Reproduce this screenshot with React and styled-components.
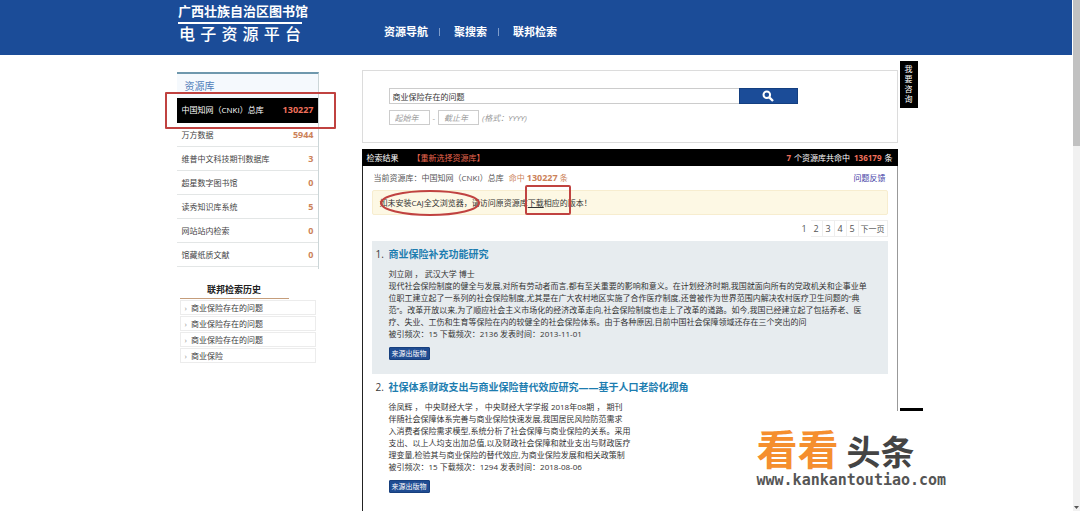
import React from "react";
import styled, { createGlobalStyle } from "styled-components";

const GlobalStyle = createGlobalStyle`
  * { box-sizing: border-box; }
  body {
    margin: 0;
    background: #fff;
    color: #3c3c3c;
    font: 8px/12px "Open Sans", "Noto Sans CJK SC", sans-serif;
  }
  ul, ol, h1, h2, h3, p { margin: 0; padding: 0; list-style: none; font-size: inherit; }
  a { color: inherit; text-decoration: none; }
  input, button { font: inherit; margin: 0; }
`;

const Page = styled.div`
  display: flex;
  height: 100vh;
  overflow: hidden;
`;
const Content = styled.div`
  flex: 1;
  min-width: 0;
`;
const Wrap = styled.div`
  width: 100%;
  max-width: 720px;
  margin: 0 auto;
  display: grid;
  grid-template-columns: 142px minmax(0, 1fr);
  column-gap: 43px;
`;
const Header = styled.header`
  height: 55px;
  margin-right: 1px;
  background: #1b4c98;
  color: #fff;
`;
const Logo = styled.h1`
  padding: 2px 0 0 2px;
  font-weight: 700;
  white-space: nowrap;
`;
const LogoTop = styled.span`
  display: block;
  font-size: 13px;
  line-height: 18px;
`;
const LogoBottom = styled.span`
  display: block;
  width: 124px;
  margin-top: 2px;
  border-top: 2px solid #fff;
  padding: 0 1px;
  font-size: 16px;
  line-height: 21px;
  font-weight: 500;
  text-align-last: justify;
`;
const Nav = styled.nav`
  padding: 23px 0 0 23px;
  font-size: 11px;
  line-height: 18px;
  font-weight: 700;
`;
const NavList = styled.ul`
  display: flex;
  align-items: center;
`;
const NavItem = styled.li`
  display: flex;
  align-items: center;
  & + &::before {
    content: "";
    height: 8px;
    margin: 0 14px 0 11px;
    border-left: 1px solid #7f9dcb;
  }
`;

const Body = styled(Wrap)`
  padding-left: 1px;
  max-width: 722px;
`;
const Sidebar = styled.aside`
  padding-top: 17px;
`;
const Databases = styled.section`
  border-top: 2px solid #6f98ad;
  border-right: 1px solid #ccd6d8;
  padding-bottom: 2px;
`;
const DbTitle = styled.h2`
  padding: 1px 8px 0;
  height: 24px;
  font-size: 10px;
  line-height: 23px;
  font-weight: 400;
  color: #4e7db9;
  background: #f5f9fd;
`;
const DbRow = styled.li`
  position: relative;
  height: ${(p) => (p.$active ? "25px" : "24px")};
  border-bottom: 1px solid ${(p) => (p.$active ? "#000" : "#e3e6e6")};
  background: ${(p) => (p.$active ? "#000" : "#fff")};
  color: ${(p) => (p.$active ? "#fff" : "#444")};
`;
const DbLink = styled.a`
  display: flex;
  justify-content: space-between;
  padding: 0 4px 0 5px;
  line-height: 24px;
`;
const Count = styled.b`
  font-size: 9px;
  color: ${(p) => (p.$hot ? "#f0705c" : "#cc8259")};
`;
const RowMark = styled.span`
  position: absolute;
  inset: -6px -18px -7px -12px;
  border: 2px solid #c04240;
  border-radius: 1px;
  pointer-events: none;
  z-index: 1;
`;
const History = styled.section`
  margin: 14px 3px 0;
`;
const HistoryTitle = styled.h2`
  width: 109px;
  height: 16px;
  border-bottom: 1px solid #c59d7b;
  font-size: 9px;
  line-height: 14px;
  text-align: center;
  color: #222;
`;
const HistoryRow = styled.li`
  height: 15px;
  margin: 1px 0;
  border: 1px solid #ececec;
  line-height: 13px;
  & a { display: flex; gap: 4px; padding-left: 4px; }
  & a::before { content: "›"; color: #999; }
`;

const Main = styled.main`
  position: relative;
  padding-top: 15px;
`;
const SearchPanel = styled.form`
  height: 73px;
  padding: 17px 26px 0;
  border: 1px solid #dcdcdc;
`;
const SearchLine = styled.div`
  display: flex;
  width: 409px;
`;
const Keyword = styled.input`
  flex: 1;
  min-width: 0;
  height: 16px;
  padding: 0 3px;
  border: 1px solid #ccc;
  border-right: 0;
  color: #333;
`;
const SearchButton = styled.button`
  display: flex;
  align-items: center;
  justify-content: center;
  width: 59px;
  height: 16px;
  padding: 0;
  border: 1px solid #143f80;
  background: #1b4c98;
`;
const YearLine = styled.div`
  display: flex;
  align-items: center;
  gap: 3px;
  margin-top: 6px;
  color: #999;
`;
const YearInput = styled.input`
  width: 41px;
  height: 15px;
  padding: 0 5px;
  border: 1px solid #ccc;
  font-style: italic;
  &::placeholder { color: #999; opacity: 1; }
`;
const Results = styled.section`
  position: relative;
  margin-top: 6px;
  min-height: 420px;
  border-left: 1px solid #222;
  border-right: 1px solid #999;
`;
const ResultsBar = styled.div`
  display: flex;
  justify-content: space-between;
  height: 17px;
  margin: 0 -1px;
  padding: 0 5px;
  background: #000;
  color: #fff;
  line-height: 17px;
  & b { font-size: 8px; color: #f0705c; margin: 0 3px 0 2px; }
`;
const Reselect = styled.a`
  margin-left: 14px;
  color: #e8664f;
`;
const Inner = styled.div`
  padding: 0 9px;
`;
const Current = styled.div`
  display: flex;
  justify-content: space-between;
  height: 24px;
  padding: 0 2px;
  line-height: 24px;
  color: #555;
`;
const Hits = styled.span`
  margin-left: 5px;
  color: #cc8259;
`;
const Feedback = styled.a`
  color: #3e3ba5;
`;
const Notice = styled.p`
  position: relative;
  height: 25px;
  padding: 0 7px;
  border: 1px solid #f7edcf;
  border-radius: 2px;
  background: #fdf8e4;
  line-height: 23px;
  color: #333;
  & a { text-decoration: underline; }
`;
const NoticeMarks = styled.svg`
  position: absolute;
  left: 0;
  top: -7px;
  width: 210px;
  height: 34px;
  fill: none;
  stroke: #c04240;
  stroke-width: 2;
`;
const Pager = styled.nav`
  display: flex;
  justify-content: flex-end;
  margin-top: 5px;
  padding-bottom: 4px;
`;
const PageLink = styled.a`
  min-width: 12px;
  height: 17px;
  padding: 0 2px;
  border: 1px solid ${(p) => (p.$current ? "transparent" : "#eee")};
  border-left: 0;
  font-size: ${(p) => (p.$wide ? "8px" : "9px")};
  line-height: 15px;
  text-align: center;
  color: #555;
`;
const Result = styled.li`
  display: grid;
  grid-template-columns: 13px minmax(0, 1fr);
  padding: 6px 4px 14px;
  background: ${(p) => (p.$shaded ? "#e7ecef" : "transparent")};
`;
const Num = styled.span`
  font-size: 10px;
  line-height: 14px;
`;
const ResultTitle = styled.h3`
  margin-bottom: 7px;
  font-size: 10px;
  line-height: 14px;
  color: #1d7db0;
  white-space: nowrap;
`;
const Line = styled.p`
  white-space: pre;
  color: #333;
`;
const SourceButton = styled.button`
  display: block;
  height: 13px;
  margin-top: 7px;
  padding: 0 2px;
  border: 1px solid #173f7d;
  border-radius: 1px;
  background: #1f4c92;
  color: #fff;
  font-size: 7px;
  line-height: 11px;
`;
const Consult = styled.a`
  position: absolute;
  top: 6px;
  right: -20px;
  width: 18px;
  padding: 3px 5px 4px;
  background: #000;
  color: #fff;
  line-height: 10px;
  word-break: break-all;
`;
const Watermark = styled.div`
  position: absolute;
  left: 271px;
  top: 262px;
  width: 439px;
  height: 180px;
  padding: 18px 0 0 123px;
  background: #fff;
`;
const ConsultEdge = styled.span`
  position: absolute;
  left: 266px;
  top: -3px;
  width: 23px;
  height: 3px;
  background: #000;
`;
const Brand = styled.div`
  display: flex;
  align-items: baseline;
  gap: 8px;
  font-size: 34px;
  line-height: 40px;
  font-weight: 700;
  color: #444;
`;
const BrandHot = styled.span`
  font-size: 41px;
  color: #f58f2e;
`;
const BrandUrl = styled.div`
  font: 700 15px/16px "DejaVu Sans Mono", monospace;
  color: #555;
`;
const Scrollbar = styled.div`
  display: flex;
  flex-direction: column;
  justify-content: space-between;
  align-items: center;
  width: 7px;
  background: #f1f1f1;
`;
const Thumb = styled.div`
  width: 7px;
  height: 146px;
  background: #c1c1c1;
`;

const databases = [
  ["中国知网（CNKI）总库", "130227"],
  ["万方数据", "5944"],
  ["维普中文科技期刊数据库", "3"],
  ["超星数字图书馆", "0"],
  ["读秀知识库系统", "5"],
  ["网站站内检索", "0"],
  ["馆藏纸质文献", "0"],
];
const history = ["商业保险存在的问题", "商业保险存在的问题", "商业保险存在的问题", "商业保险"];
const results = [
  {
    title: "商业保险补充功能研究",
    lines: [
      "刘立刚 ， 武汉大学 博士",
      "现代社会保险制度的健全与发展,对所有劳动者而言,都有至关重要的影响和意义。在计划经济时期,我国就面向所有的党政机关和企事业单",
      "位职工建立起了一系列的社会保险制度,尤其是在广大农村地区实施了合作医疗制度,还曾被作为世界范围内解决农村医疗卫生问题的“典",
      "范”。改革开放以来,为了顺应社会主义市场化的经济改革走向,社会保险制度也走上了改革的道路。如今,我国已经建立起了包括养老、医",
      "疗、失业、工伤和生育等保险在内的较健全的社会保险体系。由于各种原因,目前中国社会保障领域还存在三个突出的问",
      "被引频次：15 下载频次：2136 发表时间：2013-11-01",
    ],
  },
  {
    title: "社保体系财政支出与商业保险替代效应研究——基于人口老龄化视角",
    lines: [
      "徐凤辉 ， 中央财经大学 ， 中央财经大学学报 2018年08期 ， 期刊",
      "伴随社会保障体系完善与商业保险快速发展,我国居民风险防范需求",
      "入消费者保险需求模型,系统分析了社会保障与商业保险的关系。采用",
      "支出、以上人均支出加总值,以及财政社会保障和就业支出与财政医疗",
      "理变量,检验其与商业保险的替代效应,为商业保险发展和相关政策制",
      "被引频次：15 下载频次：1294 发表时间：2018-08-06",
    ],
  },
];

export default function App() {
  return (
    <Page>
      <GlobalStyle />
      <Content>
        <Header>
          <Wrap>
            <Logo>
              <LogoTop>广西壮族自治区图书馆</LogoTop>
              <LogoBottom>电子资源平台</LogoBottom>
            </Logo>
            <Nav>
              <NavList>
                {["资源导航", "聚搜索", "联邦检索"].map((t) => (
                  <NavItem key={t}><a href="#">{t}</a></NavItem>
                ))}
              </NavList>
            </Nav>
          </Wrap>
        </Header>
        <Body>
          <Sidebar>
            <Databases>
              <DbTitle>资源库</DbTitle>
              <ul>
                {databases.map(([name, n], i) => (
                  <DbRow key={name} $active={i === 0}>
                    <DbLink href="#">{name}<Count $hot={i === 0}>{n}</Count></DbLink>
                    {i === 0 && <RowMark />}
                  </DbRow>
                ))}
              </ul>
            </Databases>
            <History>
              <HistoryTitle>联邦检索历史</HistoryTitle>
              <ul>
                {history.map((t, i) => (
                  <HistoryRow key={i}><a href="#">{t}</a></HistoryRow>
                ))}
              </ul>
            </History>
          </Sidebar>
          <Main>
            <SearchPanel onSubmit={(e) => e.preventDefault()}>
              <SearchLine>
                <Keyword type="text" aria-label="检索词" defaultValue="商业保险存在的问题" />
                <SearchButton type="submit" aria-label="检索">
                  <svg width="12" height="12" viewBox="0 0 12 12" fill="none" stroke="#fff" strokeWidth="2">
                    <circle cx="4.8" cy="4.8" r="3.3" />
                    <path d="M7.3 7.3 11 11" strokeWidth="2.4" />
                  </svg>
                </SearchButton>
              </SearchLine>
              <YearLine>
                <YearInput type="text" aria-label="起始年" placeholder="起始年" />
                -
                <YearInput type="text" aria-label="截止年" placeholder="截止年" />
                <i>(格式：YYYY)</i>
              </YearLine>
            </SearchPanel>
            <Consult href="#">我要咨询</Consult>
            <Results>
              <ResultsBar>
                <span>检索结果<Reselect href="#">【重新选择资源库】</Reselect></span>
                <span><b>7</b>个资源库共命中 <b>136179</b>条</span>
              </ResultsBar>
              <Inner>
                <Current>
                  <span>当前资源库：中国知网（CNKI）总库<Hits>命中 <Count>130227</Count> 条</Hits></span>
                  <Feedback href="#">问题反馈</Feedback>
                </Current>
                <Notice>
                  如未安装CAJ全文浏览器，请访问原资源库<a href="#">下载</a>相应的版本！
                  <NoticeMarks viewBox="0 0 210 34">
                    <ellipse cx="57" cy="19" rx="49" ry="12" />
                    <rect x="153" y="2" width="44" height="28" rx="1" />
                  </NoticeMarks>
                </Notice>
                <Pager>
                  {["1", "2", "3", "4", "5"].map((n) => (
                    <PageLink key={n} href="#" $current={n === "1"}>{n}</PageLink>
                  ))}
                  <PageLink href="#" $wide>下一页</PageLink>
                </Pager>
                <ol>
                  {results.map((r, i) => (
                    <Result key={r.title} $shaded={i === 0}>
                      <Num>{i + 1}.</Num>
                      <div>
                        <ResultTitle><a href="#">{r.title}</a></ResultTitle>
                        {r.lines.map((l) => <Line key={l}>{l}</Line>)}
                        <SourceButton type="button">来源出版物</SourceButton>
                      </div>
                    </Result>
                  ))}
                </ol>
              </Inner>
              <Watermark>
                <ConsultEdge />
                <Brand><BrandHot>看看</BrandHot>头条</Brand>
                <BrandUrl>www.kankantoutiao.com</BrandUrl>
              </Watermark>
            </Results>
          </Main>
        </Body>
      </Content>
      <Scrollbar>
        <Thumb />
        <svg width="7" height="6" viewBox="0 0 7 6"><path d="M1 1h5L3.500 4z" fill="#555" /></svg>
      </Scrollbar>
    </Page>
  );
}
